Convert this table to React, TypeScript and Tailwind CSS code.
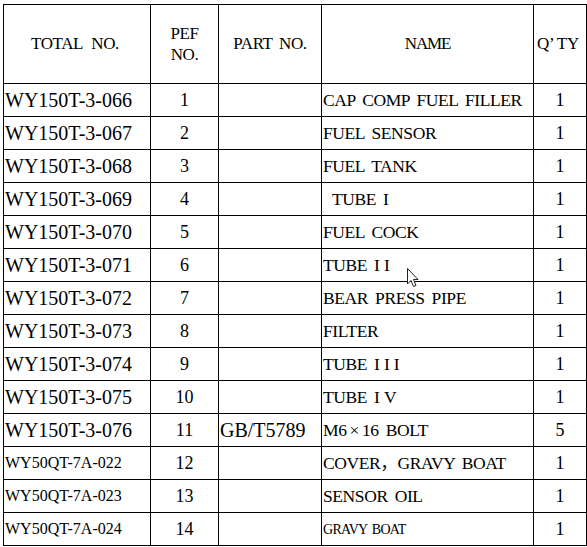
import React from "react"

type Row = {
  total: string
  pef: string
  part: string
  name: React.ReactNode
  qty: string
  small?: boolean
  smallName?: boolean
}

const serif = "font-['Liberation_Serif','Noto_Sans_CJK_SC',serif]"

const roman = (base: string, num: string, indent = false) => (
  <>
    {indent && <span className="inline-block w-[9px]" />}
    {base} <span className="tracking-[4px]">{num}</span>
  </>
)

const rows: Row[] = [
  { total: "WY150T-3-066", pef: "1", part: "", name: "CAP COMP FUEL FILLER", qty: "1" },
  { total: "WY150T-3-067", pef: "2", part: "", name: "FUEL SENSOR", qty: "1" },
  { total: "WY150T-3-068", pef: "3", part: "", name: "FUEL TANK", qty: "1" },
  { total: "WY150T-3-069", pef: "4", part: "", name: roman("TUBE", "I", true), qty: "1" },
  { total: "WY150T-3-070", pef: "5", part: "", name: "FUEL COCK", qty: "1" },
  { total: "WY150T-3-071", pef: "6", part: "", name: roman("TUBE", "II"), qty: "1" },
  { total: "WY150T-3-072", pef: "7", part: "", name: "BEAR PRESS PIPE", qty: "1" },
  { total: "WY150T-3-073", pef: "8", part: "", name: "FILTER", qty: "1" },
  { total: "WY150T-3-074", pef: "9", part: "", name: roman("TUBE", "III"), qty: "1" },
  { total: "WY150T-3-075", pef: "10", part: "", name: roman("TUBE", "IV"), qty: "1" },
  {
    total: "WY150T-3-076",
    pef: "11",
    part: "GB/T5789",
    name: (
      <>
        M6<span className="mx-[3px]">×</span>16 BOLT
      </>
    ),
    qty: "5",
  },
  { total: "WY50QT-7A-022", pef: "12", part: "", name: "COVER，GRAVY BOAT", qty: "1", small: true },
  { total: "WY50QT-7A-023", pef: "13", part: "", name: "SENSOR OIL", qty: "1", small: true },
  { total: "WY50QT-7A-024", pef: "14", part: "", name: "GRAVY BOAT", qty: "1", small: true, smallName: true },
]

function Cursor() {
  return (
    <svg className="absolute left-[406px] top-[267px]" width="13" height="21" viewBox="0 0 13 21">
      <path
        d="M1.5 1.5 L1.5 17 L5 13.5 L7.5 19.5 L10 18.5 L7.5 12.5 L12 12.5 Z"
        fill="white"
        stroke="#222"
        strokeWidth="1"
        strokeLinejoin="miter"
      />
    </svg>
  )
}

export default function App() {
  const cell = "bg-white flex items-center text-black"

  return (
    <div className={`relative w-[587px] h-[547px] bg-white pt-[4px] pl-[3px] ${serif}`}>
      <div className="grid grid-cols-[146px_67px_102px_211px_52px] grid-rows-[78px_repeat(14,32px)] gap-px bg-black border border-black w-[584px]">
        {/* header */}
        <div className={`${cell} justify-center text-[17px] tracking-[-0.4px] [word-spacing:5px] pr-[4px]`}>TOTAL NO.</div>
        <div className={`${cell} flex-col justify-center text-[17px] leading-[21px] tracking-[-0.5px]`}>
          <span>PEF</span>
          <span>NO.</span>
        </div>
        <div className={`${cell} justify-center text-[17px] tracking-[-0.4px] [word-spacing:3px]`}>PART NO.</div>
        <div className={`${cell} justify-center text-[17px] tracking-[-1.2px]`}>NAME</div>
        <div className={`${cell} justify-center text-[17px] tracking-[-0.3px] pr-[4px]`}>Q’ TY</div>

        {rows.map((r) => (
          <React.Fragment key={r.total}>
            <div className={`${cell} pl-px ${r.small ? "text-[16px]" : "text-[20px]"}`}>{r.total}</div>
            <div className={`${cell} justify-center text-[18px]`}>{r.pef}</div>
            <div className={`${cell} pl-px text-[20px]`}>{r.part}</div>
            <div
              className={`${cell} pl-px whitespace-pre ${
                r.smallName
                  ? "text-[14px] tracking-[-0.7px] [word-spacing:2px]"
                  : "text-[17.5px] tracking-[-0.4px] [word-spacing:3px]"
              }`}
            >
              {r.name}
            </div>
            <div className={`${cell} justify-center text-[18px]`}>{r.qty}</div>
          </React.Fragment>
        ))}
      </div>
      <Cursor />
    </div>
  )
}
